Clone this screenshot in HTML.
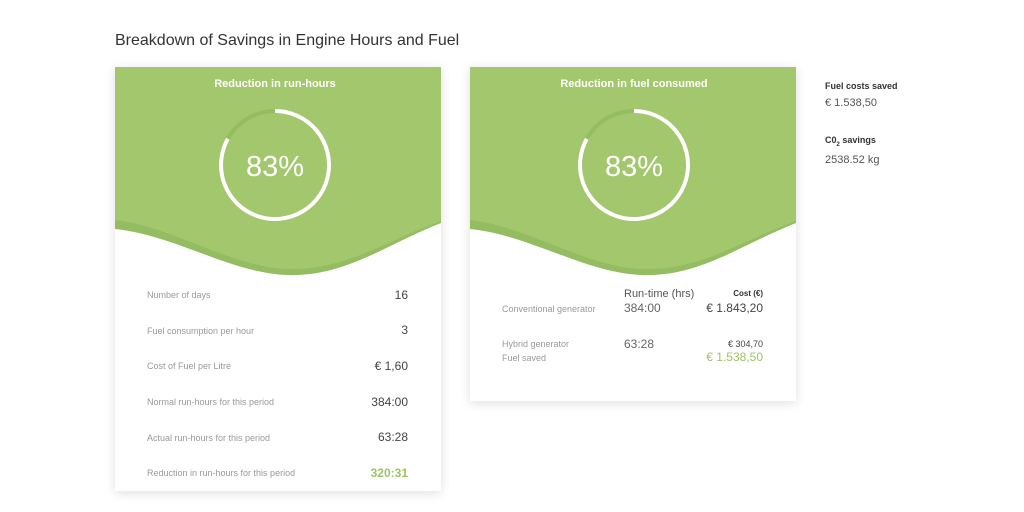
<!DOCTYPE html>
<html><head><meta charset="utf-8"><style>
body{margin:0;width:1024px;height:512px;background:#fff;font-family:"Liberation Sans",sans-serif;position:relative;overflow:hidden}
.a{position:absolute;white-space:nowrap}
.card{position:absolute;background:#fff;box-shadow:0 2px 10px rgba(0,0,0,.13)}
.lbl{font-size:9px;color:#999}
.val{font-size:12px;color:#444;text-align:right}
</style></head><body>
<div class="a" style="left:115px;top:32px;font-size:16px;color:#333">Breakdown of Savings in Engine Hours and Fuel</div>

<div class="card" style="left:115px;top:67px;width:326px;height:424px">
<svg width="326" height="215" style="position:absolute;left:0;top:0">
<path d="M0,0 H326 V156 C270,178 230,210 172,208 C115,206 60,168 0,162 Z" fill="#94bc60"/>
<path d="M0,0 H326 V154 C270,174 230,204 172,202 C115,200 60,160 0,153 Z" fill="#a3c76d"/>
<circle cx="160" cy="98" r="54" fill="none" stroke="#94bc60" stroke-width="4"/>
<path d="M160,44 A54,54 0 1 1 112.8,71.8" fill="none" stroke="#fff" stroke-width="4"/>
<text x="160" y="20" text-anchor="middle" fill="#fff" font-size="11" font-weight="bold" font-family="Liberation Sans">Reduction in run-hours</text>
<text x="160" y="109" text-anchor="middle" fill="#fff" font-size="29" font-family="Liberation Sans">83%</text>
</svg>
<div class="a lbl" style="left:32px;top:223px">Number of days</div><div class="a val" style="right:33px;top:221px">16</div>
<div class="a lbl" style="left:32px;top:259px">Fuel consumption per hour</div><div class="a val" style="right:33px;top:256px">3</div>
<div class="a lbl" style="left:32px;top:294px">Cost of Fuel per Litre</div><div class="a val" style="right:33px;top:292px">€ 1,60</div>
<div class="a lbl" style="left:32px;top:330px">Normal run-hours for this period</div><div class="a val" style="right:33px;top:328px">384:00</div>
<div class="a lbl" style="left:32px;top:366px">Actual run-hours for this period</div><div class="a val" style="right:33px;top:363px">63:28</div>
<div class="a lbl" style="left:32px;top:401px">Reduction in run-hours for this period</div><div class="a val" style="right:33px;top:399px;color:#9cc464;font-weight:bold">320:31</div>
</div>

<div class="card" style="left:470px;top:67px;width:326px;height:334px">
<svg width="326" height="215" style="position:absolute;left:0;top:0">
<path d="M0,0 H326 V156 C270,178 230,210 172,208 C115,206 60,168 0,162 Z" fill="#94bc60"/>
<path d="M0,0 H326 V154 C270,174 230,204 172,202 C115,200 60,160 0,153 Z" fill="#a3c76d"/>
<circle cx="164" cy="98" r="54" fill="none" stroke="#94bc60" stroke-width="4"/>
<path d="M164,44 A54,54 0 1 1 116.8,71.8" fill="none" stroke="#fff" stroke-width="4"/>
<text x="164" y="20" text-anchor="middle" fill="#fff" font-size="11" font-weight="bold" font-family="Liberation Sans">Reduction in fuel consumed</text>
<text x="164" y="109" text-anchor="middle" fill="#fff" font-size="29" font-family="Liberation Sans">83%</text>
</svg>
<div class="a" style="left:154px;top:221px;font-size:11px;color:#555">Run-time (hrs)</div>
<div class="a" style="right:33px;top:222px;font-size:8px;color:#333;font-weight:bold">Cost (€)</div>
<div class="a lbl" style="left:32px;top:237px">Conventional generator</div>
<div class="a" style="left:154px;top:234px;font-size:12px;color:#666">384:00</div>
<div class="a val" style="right:33px;top:234px">€ 1.843,20</div>
<div class="a lbl" style="left:32px;top:272px">Hybrid generator</div>
<div class="a" style="left:154px;top:270px;font-size:12px;color:#666">63:28</div>
<div class="a val" style="right:33px;top:272px;font-size:9px">€ 304,70</div>
<div class="a lbl" style="left:32px;top:286px">Fuel saved</div>
<div class="a val" style="right:33px;top:283px;color:#9cc464">€ 1.538,50</div>
</div>

<div class="a" style="left:825px;top:81px;font-size:9px;font-weight:bold;color:#333">Fuel costs saved</div>
<div class="a" style="left:825px;top:97px;font-size:11px;color:#555">€ 1.538,50</div>
<div class="a" style="left:825px;top:135px;font-size:9px;font-weight:bold;color:#333">C0<sub style="font-size:6px">2</sub> savings</div>
<div class="a" style="left:825px;top:154px;font-size:11px;color:#555">2538.52 kg</div>
</body></html>
